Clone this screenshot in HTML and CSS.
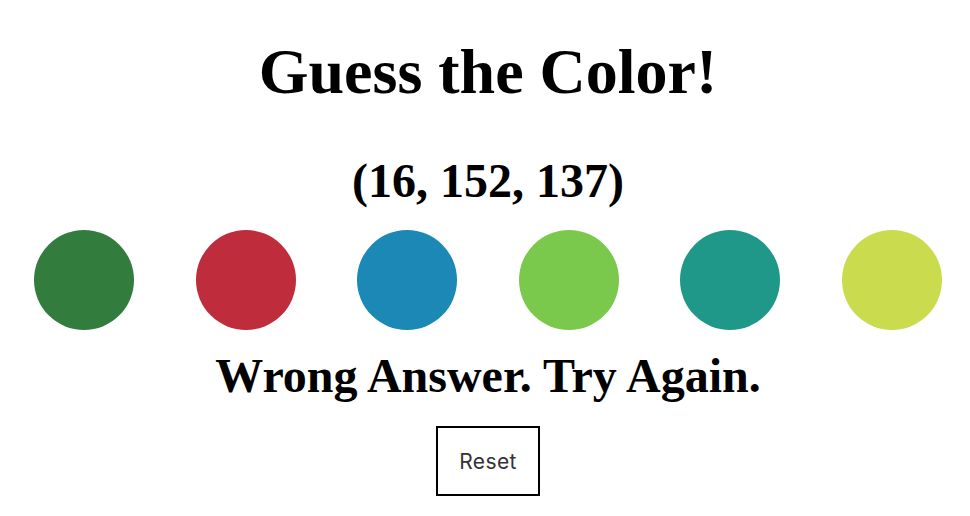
FILE: index.html
```html
<!DOCTYPE html>
<html>
<head>
<meta charset="utf-8">
<link rel="stylesheet" href="styles.css">
</head>
<body>
<div class="game">
  <h1 class="title">Guess the Color!</h1>
  <h2 class="rgb">(16, 152, 137)</h2>
  <div class="swatches">
    <div class="swatch c1"></div>
    <div class="swatch c2"></div>
    <div class="swatch c3"></div>
    <div class="swatch c4"></div>
    <div class="swatch c5"></div>
    <div class="swatch c6"></div>
  </div>
  <h2 class="status">Wrong Answer. Try Again.</h2>
  <button class="reset">Reset</button>
</div>
</body>
</html>
```

FILE: styles.css
```css
html, body {
  margin: 0;
  padding: 0;
  background: #ffffff;
}
.game {
  display: flex;
  flex-direction: column;
  align-items: center;
  padding-left: 6px;
  font-family: "Liberation Serif", "Times New Roman", serif;
  color: #000;
}
.title {
  margin: 30px 0 0;
  font-size: 64px;
  line-height: 84px;
  font-weight: bold;
}
.rgb {
  margin: 42px 0 0;
  font-size: 48px;
  line-height: 50px;
  font-weight: bold;
}
.swatches {
  align-self: stretch;
  display: flex;
  gap: 61.6px;
  padding-left: 28px;
  margin-top: 24px;
}
.swatch {
  width: 100px;
  height: 100px;
  border-radius: 50%;
  flex: none;
}
.c1 { background: #327d3e; }
.c2 { background: #bf2c3c; }
.c3 { background: #1b88b5; }
.c4 { background: #7ac84c; }
.c5 { background: #1f9889; }
.c6 { background: #cbdb4e; }
.status {
  margin: 18px 0 0;
  font-size: 48px;
  line-height: 56px;
  font-weight: bold;
}
.reset {
  margin-top: 22px;
  width: 104px;
  height: 70px;
  border: 2px solid #000;
  background: #fff;
  font-family: "Inter", "Liberation Sans", sans-serif;
  font-size: 21px;
  letter-spacing: 0.4px;
  color: #333;
  padding: 0;
}
```
